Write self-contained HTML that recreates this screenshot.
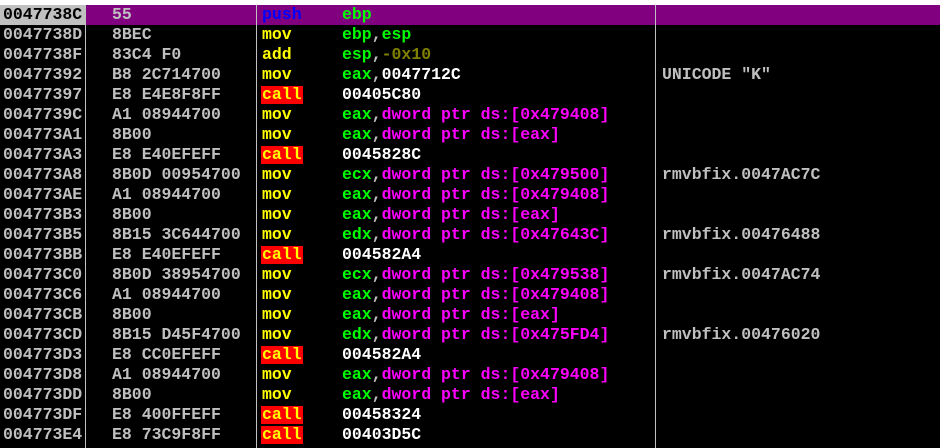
<!DOCTYPE html><html><head><style>
body{margin:0;background:#fff;width:945px;height:448px;overflow:hidden;position:relative}
#w{position:absolute;left:0;top:5px;width:940px;height:443px;background:#000;border-top-right-radius:4px}
.r{position:absolute;left:0;width:940px;height:20px;font:bold 16.5px/20px "Liberation Mono",monospace;color:#c0c0c0;white-space:pre}
.r span{position:absolute;top:0}
.a{left:3px}.h{left:112px}.m{left:262px}.o{left:342px}.c{left:662px}
.sel{background:#800080}
.sel .a{background:#c0c0c0;color:#000;left:0;padding-left:3px;width:82px}
.y{color:#ff0}.g{color:#0f0}.p{color:#f0f}.wt{color:#fff}.dy{color:#808000}
.call{background:#f00;color:#ff0;height:18px;line-height:18px;top:1px!important;padding:0 1px;left:261px}
.v{position:absolute;top:5px;width:1px;height:443px;background:#c0c0c0}
</style></head><body><div id="w"></div>
<div class="r sel" style="top:5px"><span class="a">0047738C</span><span class="h">55</span><span class="m" style="color:#0000ff">push</span><span class="o g">ebp</span></div>
<div class="r" style="top:25px"><span class="a">0047738D</span><span class="h">8BEC</span><span class="m y">mov</span><span class="o"><b class="g">ebp</b>,<b class="g">esp</b></span></div>
<div class="r" style="top:45px"><span class="a">0047738F</span><span class="h">83C4 F0</span><span class="m y">add</span><span class="o"><b class="g">esp</b>,<b class="dy">-0x10</b></span></div>
<div class="r" style="top:65px"><span class="a">00477392</span><span class="h">B8 2C714700</span><span class="m y">mov</span><span class="o"><b class="g">eax</b>,<b class="wt">0047712C</b></span><span class="c">UNICODE "K"</span></div>
<div class="r" style="top:85px"><span class="a">00477397</span><span class="h">E8 E4E8F8FF</span><span class="call">call</span><span class="o wt">00405C80</span></div>
<div class="r" style="top:105px"><span class="a">0047739C</span><span class="h">A1 08944700</span><span class="m y">mov</span><span class="o"><b class="g">eax</b>,<b class="p">dword ptr ds:[0x479408]</b></span></div>
<div class="r" style="top:125px"><span class="a">004773A1</span><span class="h">8B00</span><span class="m y">mov</span><span class="o"><b class="g">eax</b>,<b class="p">dword ptr ds:[eax]</b></span></div>
<div class="r" style="top:145px"><span class="a">004773A3</span><span class="h">E8 E40EFEFF</span><span class="call">call</span><span class="o wt">0045828C</span></div>
<div class="r" style="top:165px"><span class="a">004773A8</span><span class="h">8B0D 00954700</span><span class="m y">mov</span><span class="o"><b class="g">ecx</b>,<b class="p">dword ptr ds:[0x479500]</b></span><span class="c">rmvbfix.0047AC7C</span></div>
<div class="r" style="top:185px"><span class="a">004773AE</span><span class="h">A1 08944700</span><span class="m y">mov</span><span class="o"><b class="g">eax</b>,<b class="p">dword ptr ds:[0x479408]</b></span></div>
<div class="r" style="top:205px"><span class="a">004773B3</span><span class="h">8B00</span><span class="m y">mov</span><span class="o"><b class="g">eax</b>,<b class="p">dword ptr ds:[eax]</b></span></div>
<div class="r" style="top:225px"><span class="a">004773B5</span><span class="h">8B15 3C644700</span><span class="m y">mov</span><span class="o"><b class="g">edx</b>,<b class="p">dword ptr ds:[0x47643C]</b></span><span class="c">rmvbfix.00476488</span></div>
<div class="r" style="top:245px"><span class="a">004773BB</span><span class="h">E8 E40EFEFF</span><span class="call">call</span><span class="o wt">004582A4</span></div>
<div class="r" style="top:265px"><span class="a">004773C0</span><span class="h">8B0D 38954700</span><span class="m y">mov</span><span class="o"><b class="g">ecx</b>,<b class="p">dword ptr ds:[0x479538]</b></span><span class="c">rmvbfix.0047AC74</span></div>
<div class="r" style="top:285px"><span class="a">004773C6</span><span class="h">A1 08944700</span><span class="m y">mov</span><span class="o"><b class="g">eax</b>,<b class="p">dword ptr ds:[0x479408]</b></span></div>
<div class="r" style="top:305px"><span class="a">004773CB</span><span class="h">8B00</span><span class="m y">mov</span><span class="o"><b class="g">eax</b>,<b class="p">dword ptr ds:[eax]</b></span></div>
<div class="r" style="top:325px"><span class="a">004773CD</span><span class="h">8B15 D45F4700</span><span class="m y">mov</span><span class="o"><b class="g">edx</b>,<b class="p">dword ptr ds:[0x475FD4]</b></span><span class="c">rmvbfix.00476020</span></div>
<div class="r" style="top:345px"><span class="a">004773D3</span><span class="h">E8 CC0EFEFF</span><span class="call">call</span><span class="o wt">004582A4</span></div>
<div class="r" style="top:365px"><span class="a">004773D8</span><span class="h">A1 08944700</span><span class="m y">mov</span><span class="o"><b class="g">eax</b>,<b class="p">dword ptr ds:[0x479408]</b></span></div>
<div class="r" style="top:385px"><span class="a">004773DD</span><span class="h">8B00</span><span class="m y">mov</span><span class="o"><b class="g">eax</b>,<b class="p">dword ptr ds:[eax]</b></span></div>
<div class="r" style="top:405px"><span class="a">004773DF</span><span class="h">E8 400FFEFF</span><span class="call">call</span><span class="o wt">00458324</span></div>
<div class="r" style="top:425px"><span class="a">004773E4</span><span class="h">E8 73C9F8FF</span><span class="call">call</span><span class="o wt">00403D5C</span></div>
<div class="v" style="left:85px"></div><div class="v" style="left:256px"></div><div class="v" style="left:655px"></div>
</body></html>
